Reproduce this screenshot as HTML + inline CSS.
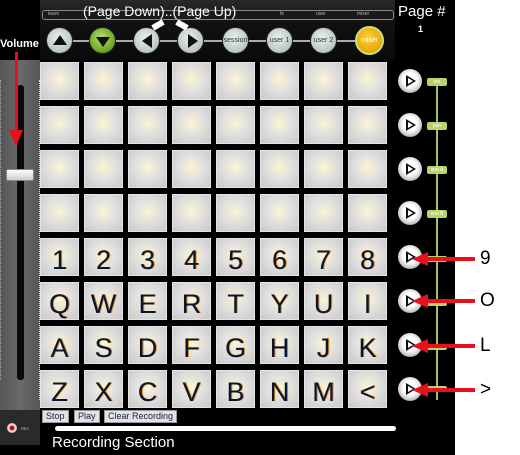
<!DOCTYPE html>
<html><head><style>
*{margin:0;padding:0;box-sizing:border-box}
body{width:520px;height:455px;background:#fff;position:relative;overflow:hidden;font-family:"Liberation Sans",sans-serif}
.abs{position:absolute}
.pad{position:absolute;width:39px;height:38px;background:radial-gradient(circle at 50% 45%,#fff6cc 0,#f0ecd8 18%,#dcdcdc 55%,#c8c8c8 100%);border:1px solid #e4e4e4;font-size:27px;color:#0b1530;text-align:center;line-height:42px;text-shadow:1px 0 0 #e08a20}
.cb{position:absolute;width:27px;height:27px;border-radius:50%;background:radial-gradient(circle at 45% 40%,#e8f0ee,#b9c6c4 70%,#6a7471);border:1px solid #222;font-size:7px;color:#333;text-align:center;line-height:25px}
.sb{position:absolute;width:24px;height:24px;border-radius:50%;background:radial-gradient(circle at 50% 45%,#fff 40%,#ccc 65%,#444 100%)}
.sb:after{content:"";position:absolute;left:8px;top:6px;border-left:10px solid #111;border-top:6px solid transparent;border-bottom:6px solid transparent}
.sb:before{content:"";position:absolute;left:10px;top:9px;border-left:5px solid #fff;border-top:3px solid transparent;border-bottom:3px solid transparent;z-index:2}
.tag{position:absolute;left:427px;width:20px;height:8px;background:#b9d36a;border-radius:2px;font-size:5px;color:#fff;text-align:center;line-height:8px}
.btn{position:absolute;top:410px;height:13px;background:#dfe3ea;border:1px solid #999;font-size:9px;line-height:11px;color:#223;padding:0 3px}
.arr{position:absolute;height:4px;background:#e8101a}
.ah{position:absolute;left:412px;border-right:16px solid #e8101a;border-top:7px solid transparent;border-bottom:7px solid transparent}
.lbl{position:absolute;left:480px;font-size:19px;color:#000}
</style></head><body>
<div class="abs" style="left:0;top:0;width:455px;height:455px;background:#000"></div>
<div class="abs" style="left:40px;top:0;width:355px;height:60px;background:linear-gradient(#2a2a2a,#111 40%,#0a0a0a)"></div>
<div class="abs" style="left:42px;top:10px;width:352px;height:10px;border:1px solid #888;border-radius:3px;background:#1a1a1a"></div>
<div class="abs" style="left:48px;top:11px;font-size:5px;color:#bbb">learn</div>
<div class="abs" style="left:280px;top:11px;font-size:5px;color:#bbb">fx</div>
<div class="abs" style="left:316px;top:11px;font-size:5px;color:#bbb">user</div>
<div class="abs" style="left:357px;top:11px;font-size:5px;color:#bbb">mixer</div>
<div class="abs" style="left:83px;top:3px;font-size:14px;color:#fff">(Page Down)..(Page Up)</div>
<div class="abs" style="left:60px;top:40px;width:320px;height:2px;background:#aab"></div>
<div class="cb" style="left:46px;top:27px"><span style="position:absolute;left:6px;top:7px;border-bottom:10px solid #111;border-left:7px solid transparent;border-right:7px solid transparent"></span></div>
<div class="cb" style="left:89px;top:27px;background:radial-gradient(circle at 45% 40%,#b8e070,#6aa020 70%,#3a6010)"><span style="position:absolute;left:6px;top:9px;border-top:10px solid #111;border-left:7px solid transparent;border-right:7px solid transparent"></span></div>
<div class="cb" style="left:133px;top:27px"><span style="position:absolute;left:8px;top:6px;border-right:10px solid #111;border-top:7px solid transparent;border-bottom:7px solid transparent"></span></div>
<div class="cb" style="left:177px;top:27px"><span style="position:absolute;left:10px;top:6px;border-left:10px solid #111;border-top:7px solid transparent;border-bottom:7px solid transparent"></span></div>
<div class="abs" style="left:152px;top:22px;width:12px;height:6px;background:#fff;transform:rotate(-30deg)"></div>
<div class="abs" style="left:176px;top:22px;width:12px;height:6px;background:#fff;transform:rotate(30deg)"></div>
<div class="cb" style="left:222px;top:27px">session</div>
<div class="cb" style="left:266px;top:27px">user 1</div>
<div class="cb" style="left:310px;top:27px">user 2</div>
<div class="cb" style="left:355px;top:26px;width:29px;height:29px;background:radial-gradient(circle at 45% 40%,#ffd040,#e8a800 70%,#a07000);border:2px solid #c8e080;color:#fff;line-height:25px">mixer</div>
<div class="abs" style="left:398px;top:3px;font-size:15px;color:#fff">Page #</div>
<div class="abs" style="left:418px;top:24px;font-size:9px;color:#fff;font-weight:bold">1</div>
<div class="abs" style="left:0;top:60px;width:40px;height:350px;background:linear-gradient(90deg,#555,#6a6a6a 50%,#555)"></div>
<div class="abs" style="left:39px;top:80px;width:1px;height:320px;border-left:1px dotted #ddd"></div>
<div class="abs" style="left:0;top:80px;width:1px;height:300px;border-left:1px dotted #aaa"></div>
<div class="abs" style="left:17px;top:85px;width:7px;height:295px;background:#0a0a0a;border-radius:3px"></div>
<div class="abs" style="left:6px;top:169px;width:28px;height:12px;background:linear-gradient(#fff,#ccc);border:1px solid #888;border-radius:2px"></div>
<div class="abs" style="left:0;top:38px;font-size:11px;font-weight:bold;color:#fff">Volume</div>
<div class="arr" style="left:15px;top:52px;width:3px;height:80px"></div>
<div class="abs" style="left:9px;top:130px;border-top:16px solid #e8101a;border-left:7px solid transparent;border-right:7px solid transparent"></div>
<div class="abs" style="left:0;top:410px;width:40px;height:35px;background:#2a2a2a"></div>
<div class="abs" style="left:7px;top:423px;width:10px;height:10px;border-radius:50%;background:radial-gradient(#d00 30%,#eee 40%,#888)"></div>
<div class="abs" style="left:21px;top:426px;font-size:4px;color:#ccc">REC</div>
<div id="g"></div>
<script>
var L=["","","","","12345678","QWERTYUI","ASDFGHJK","ZXCVBNM<"],h="";
for(var r=0;r<8;r++)for(var c=0;c<8;c++){h+='<div class="pad" style="left:'+(40+c*44)+'px;top:'+(62+r*44)+'px">'+(L[r][c]||'').replace('<','&lt;')+'</div>';}
for(var r=0;r<8;r++){h+='<div class="sb" style="left:398px;top:'+(69+r*44)+'px"></div>';}
document.getElementById('g').innerHTML=h;
</script>
<div class="abs" style="left:436px;top:82px;width:2px;height:318px;background:#a8c060"></div>
<div class="tag" style="top:78px">vol</div>
<div class="tag" style="top:122px">pan</div>
<div class="tag" style="top:166px">snd A</div>
<div class="tag" style="top:210px">snd B</div>
<div class="tag" style="top:256px;height:6px"></div>
<div class="tag" style="top:300px;height:6px"></div>
<div class="tag" style="top:344px;height:6px"></div>
<div class="tag" style="top:386px;height:6px"></div>
<div class="arr" style="left:426px;top:257px;width:49px"></div><div class="ah" style="top:252px"></div>
<div class="arr" style="left:426px;top:299px;width:49px"></div><div class="ah" style="top:294px"></div>
<div class="arr" style="left:426px;top:344px;width:49px"></div><div class="ah" style="top:339px"></div>
<div class="arr" style="left:426px;top:388px;width:49px"></div><div class="ah" style="top:383px"></div>
<div class="lbl" style="top:248px">9</div>
<div class="lbl" style="top:290px">O</div>
<div class="lbl" style="top:335px">L</div>
<div class="lbl" style="top:379px">&gt;</div>
<div class="btn" style="left:42px">Stop</div>
<div class="btn" style="left:74px">Play</div>
<div class="btn" style="left:104px">Clear Recording</div>
<div class="abs" style="left:55px;top:426px;width:341px;height:5px;background:#fff;border-radius:3px"></div>
<div class="abs" style="left:52px;top:434px;font-size:15px;color:#fff">Recording Section</div>
</body></html>
